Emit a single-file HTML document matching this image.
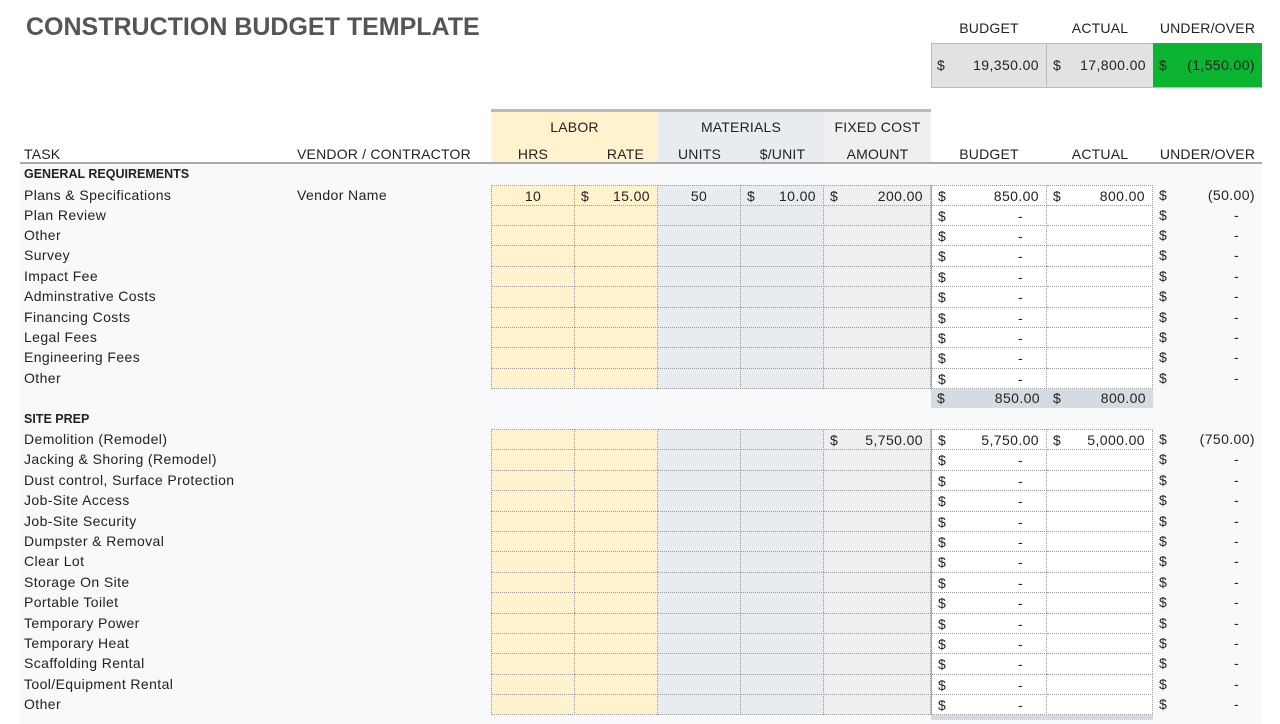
<!DOCTYPE html>
<html><head><meta charset="utf-8"><style>
*{margin:0;padding:0}
body{width:1280px;height:720px;overflow:hidden;background:#fff;font-family:"Liberation Sans",sans-serif;color:#222;font-size:14px;letter-spacing:0.4px;position:relative}
.abs{position:absolute}
.bg{position:absolute;left:20px;top:164px;width:1242px;height:560px;background:#f7f9fb}
.r{position:absolute;left:0;width:1280px;height:21px}
.r>*{position:absolute;top:0;height:21px;line-height:20px;box-sizing:border-box;white-space:nowrap}
.t{left:24px}.v{left:297px}
.c{border-right:1px dotted #999;border-top:1px dotted #999}
.h{left:491px;width:84px;background:#fff2cc;border-left:1px dotted #999}
.ra{left:575px;width:83px;background:#fff2cc}
.u{left:658px;width:83px;background:#e8ebf0}
.pu{left:741px;width:83px;background:#e8ebf0}
.a{left:824px;width:107px;background:#efefef}
.b{left:931px;width:116px;background:#fff;border-left:1px solid #aaa}
.ac{left:1047px;width:106px;background:#fff}
.uo{left:1153px;width:109px}
.m{display:flex;justify-content:space-between;padding:0 7px 0 6px}
.d{padding-right:16px}
.hd{position:absolute;font-size:14px;color:#222;text-align:center;letter-spacing:0.2px}
</style></head><body>
<div class="abs" style="left:26px;top:13px;font-size:25px;font-weight:bold;color:#555;letter-spacing:0">CONSTRUCTION BUDGET TEMPLATE</div>
<div class="hd" style="left:931px;top:20px;width:116px">BUDGET</div>
<div class="hd" style="left:1047px;top:20px;width:106px">ACTUAL</div>
<div class="hd" style="left:1153px;top:20px;width:109px">UNDER/OVER</div>
<div class="abs" style="left:931px;top:43px;width:331px;height:45px;background:#e2e2e2;border:1px solid #bbb;box-sizing:border-box"></div>
<div class="abs m" style="left:931px;top:43px;width:116px;height:45px;line-height:45px;box-sizing:border-box;border-right:1px solid #bbb"><span>$</span><span>19,350.00</span></div>
<div class="abs m" style="left:1047px;top:43px;width:106px;height:45px;line-height:45px;box-sizing:border-box"><span>$</span><span>17,800.00</span></div>
<div class="abs m" style="left:1153px;top:43px;width:109px;height:45px;line-height:45px;box-sizing:border-box;background:#0bb532;border-bottom:1px solid #bbb"><span>$</span><span>(1,550.00)</span></div>

<div class="abs" style="left:491px;top:109px;width:440px;height:3px;background:#bbb"></div>
<div class="abs" style="left:491px;top:112px;width:167px;height:51px;background:#fff2cc"></div>
<div class="abs" style="left:658px;top:112px;width:166px;height:51px;background:#e8ebf0"></div>
<div class="abs" style="left:824px;top:112px;width:107px;height:51px;background:#efefef"></div>
<div class="hd" style="left:491px;top:119px;width:167px">LABOR</div>
<div class="hd" style="left:658px;top:119px;width:166px">MATERIALS</div>
<div class="hd" style="left:824px;top:119px;width:107px">FIXED COST</div>
<div class="bg"></div>
<div class="abs" style="left:20px;top:162px;width:1242px;height:2px;background:#aaa"></div>
<div class="hd" style="left:24px;top:146px">TASK</div>
<div class="hd" style="left:297px;top:146px">VENDOR / CONTRACTOR</div>
<div class="hd" style="left:491px;top:146px;width:84px">HRS</div>
<div class="hd" style="left:575px;top:146px;width:83px;text-align:right;padding-right:14px;box-sizing:border-box">RATE</div>
<div class="hd" style="left:658px;top:146px;width:83px">UNITS</div>
<div class="hd" style="left:741px;top:146px;width:83px">$/UNIT</div>
<div class="hd" style="left:824px;top:146px;width:107px">AMOUNT</div>
<div class="hd" style="left:931px;top:146px;width:116px">BUDGET</div>
<div class="hd" style="left:1047px;top:146px;width:106px">ACTUAL</div>
<div class="hd" style="left:1153px;top:146px;width:109px">UNDER/OVER</div>

<div class="abs" style="left:24px;top:167px;font-weight:bold;font-size:12.5px;letter-spacing:0">GENERAL REQUIREMENTS</div>

<div class="r" style="top:185px"><span class="t">Plans &amp; Specifications</span><span class="v">Vendor Name</span><span class="c h" style="text-align:center">10</span><span class="c ra m"><span>$</span><span>15.00</span></span><span class="c u" style="text-align:center">50</span><span class="c pu m"><span>$</span><span>10.00</span></span><span class="c a m"><span>$</span><span>200.00</span></span><span class="c b m"><span>$</span><span>850.00</span></span><span class="c ac m"><span>$</span><span>800.00</span></span><span class="uo m"><span>$</span><span>(50.00)</span></span></div>
<div class="r" style="top:205px"><span class="t">Plan Review</span><span class="c h"></span><span class="c ra"></span><span class="c u"></span><span class="c pu"></span><span class="c a"></span><span class="c b m"><span>$</span><span class="d">-</span></span><span class="c ac"></span><span class="uo m"><span>$</span><span class="d">-</span></span></div>
<div class="r" style="top:225px"><span class="t">Other</span><span class="c h"></span><span class="c ra"></span><span class="c u"></span><span class="c pu"></span><span class="c a"></span><span class="c b m"><span>$</span><span class="d">-</span></span><span class="c ac"></span><span class="uo m"><span>$</span><span class="d">-</span></span></div>
<div class="r" style="top:245px"><span class="t">Survey</span><span class="c h"></span><span class="c ra"></span><span class="c u"></span><span class="c pu"></span><span class="c a"></span><span class="c b m"><span>$</span><span class="d">-</span></span><span class="c ac"></span><span class="uo m"><span>$</span><span class="d">-</span></span></div>
<div class="r" style="top:266px"><span class="t">Impact Fee</span><span class="c h"></span><span class="c ra"></span><span class="c u"></span><span class="c pu"></span><span class="c a"></span><span class="c b m"><span>$</span><span class="d">-</span></span><span class="c ac"></span><span class="uo m"><span>$</span><span class="d">-</span></span></div>
<div class="r" style="top:286px"><span class="t">Adminstrative Costs</span><span class="c h"></span><span class="c ra"></span><span class="c u"></span><span class="c pu"></span><span class="c a"></span><span class="c b m"><span>$</span><span class="d">-</span></span><span class="c ac"></span><span class="uo m"><span>$</span><span class="d">-</span></span></div>
<div class="r" style="top:307px"><span class="t">Financing Costs</span><span class="c h"></span><span class="c ra"></span><span class="c u"></span><span class="c pu"></span><span class="c a"></span><span class="c b m"><span>$</span><span class="d">-</span></span><span class="c ac"></span><span class="uo m"><span>$</span><span class="d">-</span></span></div>
<div class="r" style="top:327px"><span class="t">Legal Fees</span><span class="c h"></span><span class="c ra"></span><span class="c u"></span><span class="c pu"></span><span class="c a"></span><span class="c b m"><span>$</span><span class="d">-</span></span><span class="c ac"></span><span class="uo m"><span>$</span><span class="d">-</span></span></div>
<div class="r" style="top:347px"><span class="t">Engineering Fees</span><span class="c h"></span><span class="c ra"></span><span class="c u"></span><span class="c pu"></span><span class="c a"></span><span class="c b m"><span>$</span><span class="d">-</span></span><span class="c ac"></span><span class="uo m"><span>$</span><span class="d">-</span></span></div>
<div class="r" style="top:368px"><span class="t">Other</span><span class="c h"></span><span class="c ra"></span><span class="c u"></span><span class="c pu"></span><span class="c a"></span><span class="c b m"><span>$</span><span class="d">-</span></span><span class="c ac"></span><span class="uo m"><span>$</span><span class="d">-</span></span></div>
<div class="abs" style="left:491px;top:388px;width:662px;border-top:1px dotted #999"></div>
<div class="abs m" style="left:931px;top:389px;width:116px;height:19px;line-height:19px;background:#d5dbe2;box-sizing:border-box"><span>$</span><span>850.00</span></div>
<div class="abs m" style="left:1047px;top:389px;width:106px;height:19px;line-height:19px;background:#d5dbe2;box-sizing:border-box"><span>$</span><span>800.00</span></div>

<div class="abs" style="left:24px;top:412px;font-weight:bold;font-size:12.5px;letter-spacing:0">SITE PREP</div>
<div class="r" style="top:429px"><span class="t">Demolition (Remodel)</span><span class="c h"></span><span class="c ra"></span><span class="c u"></span><span class="c pu"></span><span class="c a m"><span>$</span><span>5,750.00</span></span><span class="c b m"><span>$</span><span>5,750.00</span></span><span class="c ac m"><span>$</span><span>5,000.00</span></span><span class="uo m"><span>$</span><span>(750.00)</span></span></div>
<div class="r" style="top:449px"><span class="t">Jacking &amp; Shoring (Remodel)</span><span class="c h"></span><span class="c ra"></span><span class="c u"></span><span class="c pu"></span><span class="c a"></span><span class="c b m"><span>$</span><span class="d">-</span></span><span class="c ac"></span><span class="uo m"><span>$</span><span class="d">-</span></span></div>
<div class="r" style="top:470px"><span class="t">Dust control, Surface Protection</span><span class="c h"></span><span class="c ra"></span><span class="c u"></span><span class="c pu"></span><span class="c a"></span><span class="c b m"><span>$</span><span class="d">-</span></span><span class="c ac"></span><span class="uo m"><span>$</span><span class="d">-</span></span></div>
<div class="r" style="top:490px"><span class="t">Job-Site Access</span><span class="c h"></span><span class="c ra"></span><span class="c u"></span><span class="c pu"></span><span class="c a"></span><span class="c b m"><span>$</span><span class="d">-</span></span><span class="c ac"></span><span class="uo m"><span>$</span><span class="d">-</span></span></div>
<div class="r" style="top:511px"><span class="t">Job-Site Security</span><span class="c h"></span><span class="c ra"></span><span class="c u"></span><span class="c pu"></span><span class="c a"></span><span class="c b m"><span>$</span><span class="d">-</span></span><span class="c ac"></span><span class="uo m"><span>$</span><span class="d">-</span></span></div>
<div class="r" style="top:531px"><span class="t">Dumpster &amp; Removal</span><span class="c h"></span><span class="c ra"></span><span class="c u"></span><span class="c pu"></span><span class="c a"></span><span class="c b m"><span>$</span><span class="d">-</span></span><span class="c ac"></span><span class="uo m"><span>$</span><span class="d">-</span></span></div>
<div class="r" style="top:551px"><span class="t">Clear Lot</span><span class="c h"></span><span class="c ra"></span><span class="c u"></span><span class="c pu"></span><span class="c a"></span><span class="c b m"><span>$</span><span class="d">-</span></span><span class="c ac"></span><span class="uo m"><span>$</span><span class="d">-</span></span></div>
<div class="r" style="top:572px"><span class="t">Storage On Site</span><span class="c h"></span><span class="c ra"></span><span class="c u"></span><span class="c pu"></span><span class="c a"></span><span class="c b m"><span>$</span><span class="d">-</span></span><span class="c ac"></span><span class="uo m"><span>$</span><span class="d">-</span></span></div>
<div class="r" style="top:592px"><span class="t">Portable Toilet</span><span class="c h"></span><span class="c ra"></span><span class="c u"></span><span class="c pu"></span><span class="c a"></span><span class="c b m"><span>$</span><span class="d">-</span></span><span class="c ac"></span><span class="uo m"><span>$</span><span class="d">-</span></span></div>
<div class="r" style="top:613px"><span class="t">Temporary Power</span><span class="c h"></span><span class="c ra"></span><span class="c u"></span><span class="c pu"></span><span class="c a"></span><span class="c b m"><span>$</span><span class="d">-</span></span><span class="c ac"></span><span class="uo m"><span>$</span><span class="d">-</span></span></div>
<div class="r" style="top:633px"><span class="t">Temporary Heat</span><span class="c h"></span><span class="c ra"></span><span class="c u"></span><span class="c pu"></span><span class="c a"></span><span class="c b m"><span>$</span><span class="d">-</span></span><span class="c ac"></span><span class="uo m"><span>$</span><span class="d">-</span></span></div>
<div class="r" style="top:653px"><span class="t">Scaffolding Rental</span><span class="c h"></span><span class="c ra"></span><span class="c u"></span><span class="c pu"></span><span class="c a"></span><span class="c b m"><span>$</span><span class="d">-</span></span><span class="c ac"></span><span class="uo m"><span>$</span><span class="d">-</span></span></div>
<div class="r" style="top:674px"><span class="t">Tool/Equipment Rental</span><span class="c h"></span><span class="c ra"></span><span class="c u"></span><span class="c pu"></span><span class="c a"></span><span class="c b m"><span>$</span><span class="d">-</span></span><span class="c ac"></span><span class="uo m"><span>$</span><span class="d">-</span></span></div>
<div class="r" style="top:694px"><span class="t">Other</span><span class="c h"></span><span class="c ra"></span><span class="c u"></span><span class="c pu"></span><span class="c a"></span><span class="c b m"><span>$</span><span class="d">-</span></span><span class="c ac"></span><span class="uo m"><span>$</span><span class="d">-</span></span></div>
<div class="abs" style="left:491px;top:714px;width:662px;border-top:1px dotted #999"></div>
<div class="abs" style="left:931px;top:715px;width:222px;height:5px;background:#d5dbe2"></div>
</body></html>
